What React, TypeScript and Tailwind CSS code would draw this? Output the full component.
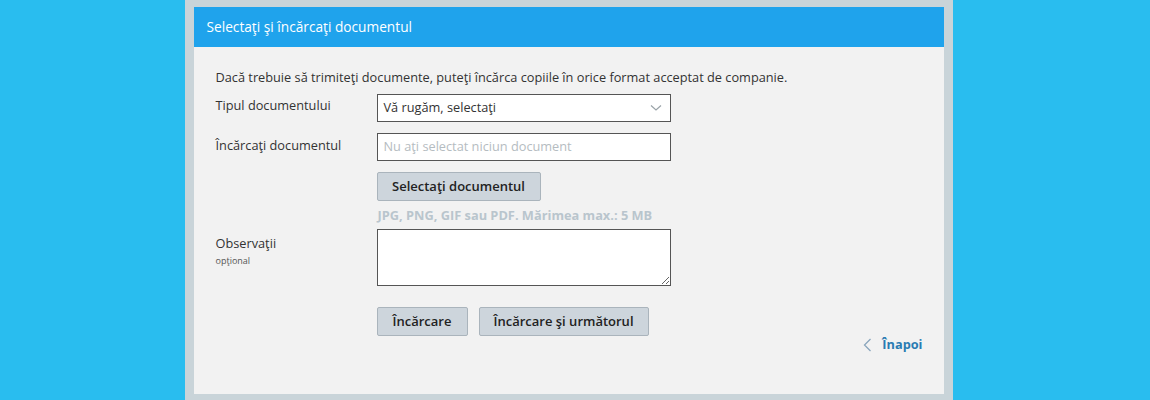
import React from "react";

export default function App() {
  return (
    <div
      className="w-[1150px] h-[400px] bg-[#29bdef] flex justify-center overflow-hidden"
      style={{ fontFamily: '"Open Sans", "Noto Sans", sans-serif' }}
    >
      <div className="w-[768px] h-[400px] bg-[#c9d4d9] pt-[7px] px-[9px] ml-[-13px]">
        <div className="h-[387px] bg-[#f2f2f2] flex flex-col">
          <div className="h-[40px] bg-[#1fa3ec] flex items-center pl-[13px] text-white text-[13.7px]">
            Selectaţi şi încărcaţi documentul
          </div>
          <div className="pl-[22px] pr-[22px] pt-[21px] text-[#333] text-[12.75px]">
            <div className="leading-[18px]">
              Dacă trebuie să trimiteţi documente, puteţi încărca copiile în orice format acceptat de companie.
            </div>
            <div className="flex mt-[8px]">
              <div className="w-[161px] pt-[2px] leading-[18px]">Tipul documentului</div>
              <div className="w-[294px] h-[28px] bg-white border border-[#555] flex items-center justify-between pl-[6px] pr-[8px]">
                <span>Vă rugăm, selectaţi</span>
                <svg width="12" height="8" viewBox="0 0 12 8" fill="none">
                  <path d="M1 1.5 L6 6 L11 1.5" stroke="#9aa3a8" strokeWidth="1.2" />
                </svg>
              </div>
            </div>
            <div className="flex mt-[11px]">
              <div className="w-[161px] pt-[3px] leading-[18px]">Încărcaţi documentul</div>
              <div className="w-[294px] h-[28px] bg-white border border-[#555] flex items-center pl-[6px] text-[#b5bcc1]">
                Nu aţi selectat niciun document
              </div>
            </div>
            <div className="flex mt-[11px]">
              <div className="w-[161px]" />
              <div>
                <div className="w-[164px] h-[29px] bg-[#cdd5dc] border border-[#aab4bc] rounded-[2px] flex items-center justify-center font-semibold text-[13px] text-[#222]">
                  Selectaţi documentul
                </div>
                <div className="mt-[6px] text-[12.8px] font-bold text-[#b9c5cd] leading-[16px] pl-[1px]">
                  JPG, PNG, GIF sau PDF. Mărimea max.: 5 MB
                </div>
              </div>
            </div>
            <div className="flex mt-[6px]">
              <div className="w-[161px] pt-[5px]">
                <div className="leading-[18px]">Observaţii</div>
                <div className="text-[9px] text-[#555] leading-[12px] mt-[3px]">opţional</div>
              </div>
              <textarea className="w-[294px] h-[57px] bg-white border border-[#555] resize-y block" />
            </div>
            <div className="flex mt-[21px]">
              <div className="w-[161px]" />
              <div className="flex gap-[11px]">
                <div className="w-[91px] h-[29px] bg-[#cdd5dc] border border-[#aab4bc] rounded-[2px] flex items-center justify-center font-semibold text-[13px] text-[#222]">
                  Încărcare
                </div>
                <div className="w-[170px] h-[29px] bg-[#cdd5dc] border border-[#aab4bc] rounded-[2px] flex items-center justify-center font-semibold text-[13px] text-[#222]">
                  Încărcare şi următorul
                </div>
              </div>
            </div>
            <div className="flex justify-end items-center h-[18px] text-[#2a7cb3] font-bold pr-[0px] mr-[-1px]">
              <svg width="9" height="14" viewBox="0 0 9 14" fill="none" className="mr-[10px]">
                <path d="M7.5 1 L1.5 7 L7.5 13" stroke="#8aa6bd" strokeWidth="1.3" />
              </svg>
              <span>Înapoi</span>
            </div>
          </div>
        </div>
      </div>
    </div>
  );
}
